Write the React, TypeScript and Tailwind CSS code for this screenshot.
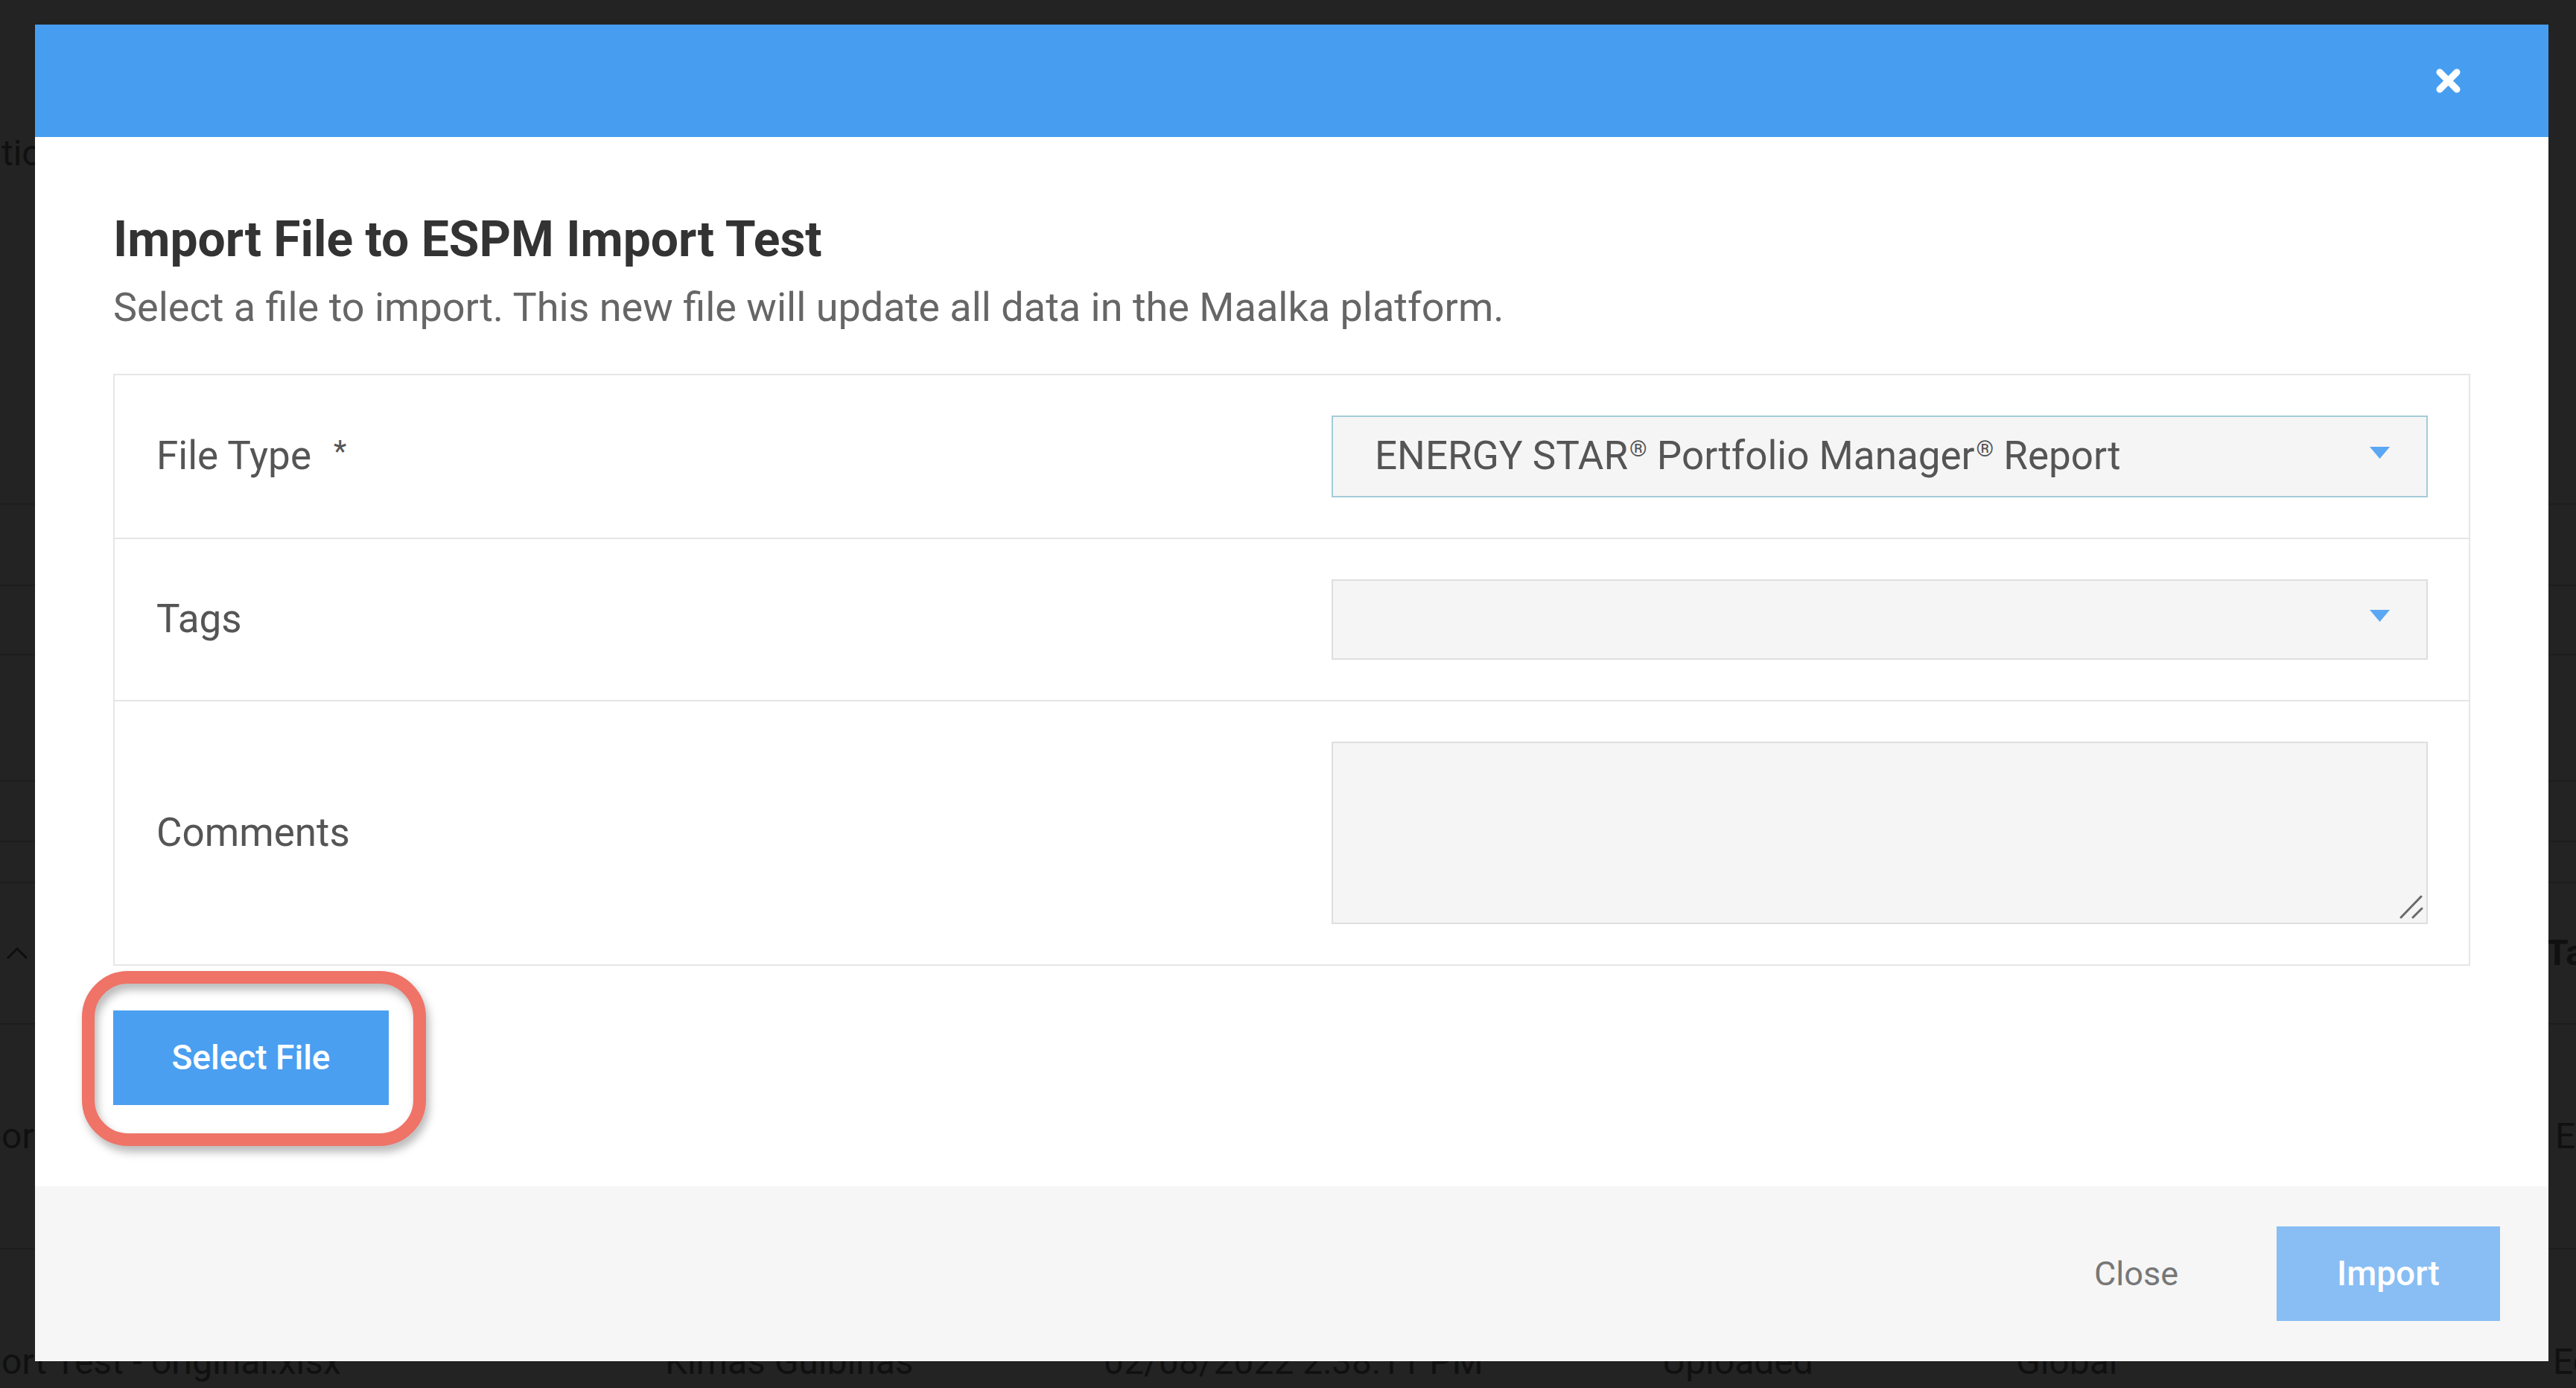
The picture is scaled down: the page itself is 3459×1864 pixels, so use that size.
import React from "react";

function Caret() {
  return (
    <svg width="27" height="16" viewBox="0 0 27 16" className="shrink-0 -mt-[10px]">
      <polygon points="0,0 27,0 13.5,16" fill="#5aa7f3" />
    </svg>
  );
}

function Reg() {
  return <span className="text-[30px] align-[17px] ml-[2px]">®</span>;
}

function BackgroundPage() {
  return (
    <div className="flex flex-col text-[48px] text-[#101010] whitespace-nowrap">
      <div className="h-[678px] shrink-0 border-b-2 border-[#1d1d1d] flex items-start pt-[170px]">
        <span className="-ml-[58px]">Options</span>
      </div>
      <div className="h-[109px] shrink-0 border-b-2 border-[#1d1d1d]" />
      <div className="h-[93px] shrink-0 border-b-2 border-[#1d1d1d]" />
      <div className="h-[170px] shrink-0 border-b-2 border-[#1d1d1d]" />
      <div className="h-[81px] shrink-0 border-b-2 border-[#1d1d1d]" />
      <div className="h-[55px] shrink-0 border-b-2 border-[#1d1d1d]" />
      <div className="h-[190px] shrink-0 border-b-2 border-[#1d1d1d] flex items-center justify-between pl-[8px]">
        <svg width="30" height="18" viewBox="0 0 30 18">
          <path d="M2 16 L15 3 L28 16" fill="none" stroke="#0e0e0e" strokeWidth="3" />
        </svg>
        <span className="font-bold -mr-[40px] w-[80px]">Tags</span>
      </div>
      <div className="h-[302px] shrink-0 border-b-2 border-[#1d1d1d] flex items-center justify-between">
        <span className="-ml-[80px]">Import Test - original.xlsx</span>
        <span className="-mr-[60px] w-[88px]">Edit</span>
      </div>
      <div className="h-[302px] shrink-0 flex items-center">
        <span className="-ml-[80px] w-[973px] shrink-0">Import Test - original.xlsx</span>
        <span className="w-[589px] shrink-0">Kimas Gulbinas</span>
        <span className="w-[750px] shrink-0">02/08/2022 2:38:11 PM</span>
        <span className="w-[475px] shrink-0">Uploaded</span>
        <span className="w-[721px] shrink-0">Global</span>
        <span className="shrink-0">Edit</span>
      </div>
    </div>
  );
}

function Modal() {
  return (
    <div className="absolute left-[47px] top-[33px] w-[3375px] h-[1795px] bg-white flex flex-col">
      <div className="h-[151px] shrink-0 bg-[#479ef0] flex items-center justify-end pr-[117px]">
        <svg width="35" height="35" viewBox="0 0 35 35">
          <path d="M6 6 L29 29 M29 6 L6 29" stroke="white" strokeWidth="9" strokeLinecap="round" />
        </svg>
      </div>

      <div className="flex-1 px-[105px] pt-[98px]">
        <h1 className="text-[66px] leading-[80px] font-bold text-[#333333]">Import File to ESPM Import Test</h1>
        <p className="mt-[18px] text-[54px] leading-[66px] text-[#666666]">
          Select a file to import. This new file will update all data in the Maalka platform.
        </p>

        <div className="mt-[56px] border-2 border-[#e6e6e6]">
          <div className="flex items-center pl-[56px] pr-[55px] py-[54px] border-b-2 border-[#e6e6e6]">
            <div className="flex-1 text-[53px] text-[#555555]">
              File Type
              <span className="ml-[30px] text-[40px] align-[10px]">*</span>
            </div>
            <div className="w-[1472px] h-[110px] bg-[#f5f5f5] border-2 border-[#a4ccd8] flex items-center justify-between pl-[56px] pr-[49px]">
              <span className="text-[53px] text-[#555555] whitespace-nowrap">
                ENERGY STAR<Reg /> Portfolio Manager<Reg /> Report
              </span>
              <Caret />
            </div>
          </div>

          <div className="flex items-center pl-[56px] pr-[55px] py-[54px] border-b-2 border-[#e6e6e6]">
            <div className="flex-1 text-[53px] text-[#555555]">Tags</div>
            <div className="w-[1472px] h-[108px] bg-[#f5f5f5] border-2 border-[#dedede] flex items-center justify-end pr-[49px]">
              <Caret />
            </div>
          </div>

          <div className="flex items-center pl-[56px] pr-[55px] py-[54px]">
            <div className="flex-1 text-[53px] text-[#555555]">Comments</div>
            <div className="relative w-[1472px] h-[245px] bg-[#f5f5f5] border-2 border-[#dedede]">
              <svg width="32" height="32" viewBox="0 0 32 32" className="absolute right-[4px] bottom-[5px]">
                <path d="M29 2 L2 30 M30 18 L18 30" stroke="#6b6b6b" strokeWidth="3" strokeLinecap="round" />
              </svg>
            </div>
          </div>
        </div>

        <div className="relative mt-[60px] w-[370px]">
          <div className="absolute -left-[42px] -top-[53px] w-[462px] h-[235px] rounded-[62px] border-[17px] border-[#ef7367] drop-shadow-[4px_8px_6px_rgba(0,0,0,0.28)]" />
          <button className="relative w-[370px] h-[127px] bg-[#4a9ff0] text-white text-[46px] font-medium">
            Select File
          </button>
        </div>
      </div>

      <div className="h-[235px] shrink-0 bg-[#f6f6f6] flex items-center justify-end pr-[65px]">
        <span className="mr-[132px] text-[45px] text-[#777777]">Close</span>
        <button className="w-[300px] h-[127px] bg-[#88bef3] text-white text-[46px] font-medium">Import</button>
      </div>
    </div>
  );
}

export default function App() {
  return (
    <div className="relative w-[3459px] h-[1864px] overflow-hidden bg-[#232323] font-['Roboto',sans-serif]">
      <BackgroundPage />
      <Modal />
    </div>
  );
}
